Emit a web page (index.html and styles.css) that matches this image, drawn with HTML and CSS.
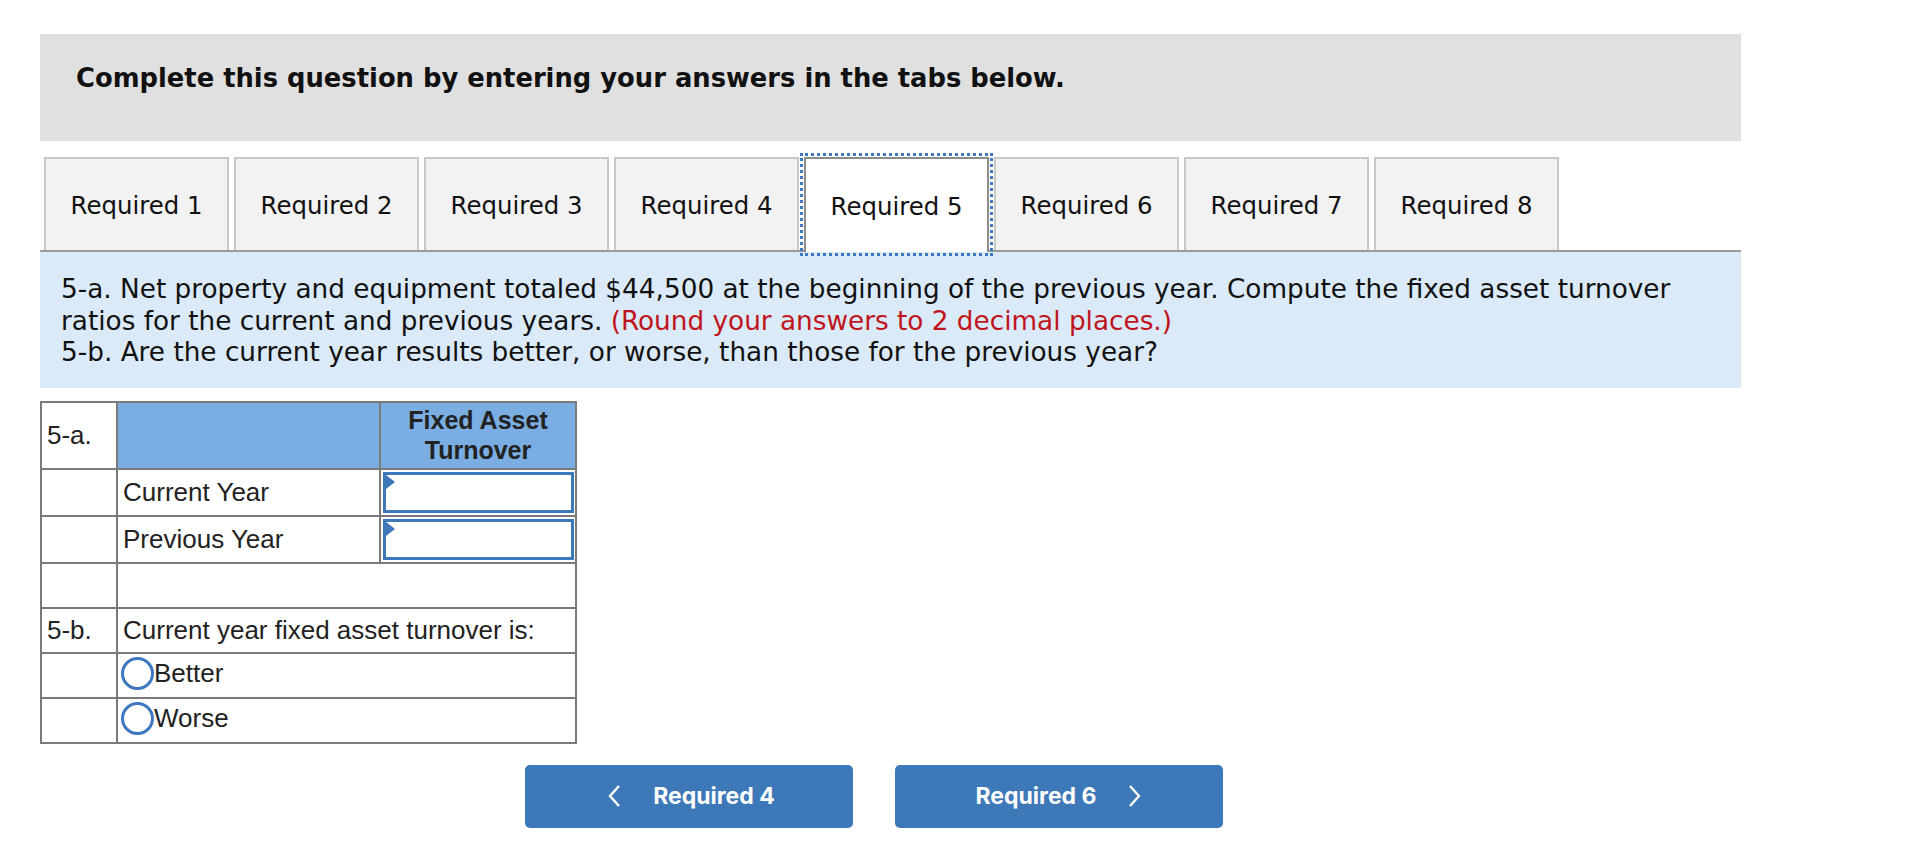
FILE: index.html
```html
<!DOCTYPE html>
<html>
<head>
<meta charset="utf-8">
<link rel="stylesheet" href="styles.css">
</head>
<body>
<div class="page">
  <div class="banner">Complete this question by entering your answers in the tabs below.</div>

  <div class="tabs">
    <div class="tab">Required 1</div>
    <div class="tab">Required 2</div>
    <div class="tab">Required 3</div>
    <div class="tab">Required 4</div>
    <div class="tab active">Required 5</div>
    <div class="tab">Required 6</div>
    <div class="tab">Required 7</div>
    <div class="tab">Required 8</div>
  </div>

  <div class="prompt">
    <p>5-a. Net property and equipment totaled $44,500 at the beginning of the previous year. Compute the fixed asset turnover<br>ratios for the current and previous years. <span class="note">(Round your answers to 2 decimal places.)</span></p>
    <p>5-b. Are the current year results better, or worse, than those for the previous year?</p>
  </div>

  <table class="grid">
    <colgroup>
      <col class="c1"><col class="c2"><col class="c3">
    </colgroup>
    <tr class="head">
      <td class="lbl">5-a.</td>
      <td class="hd"></td>
      <td class="hd title">Fixed Asset<br>Turnover</td>
    </tr>
    <tr>
      <td></td>
      <td>Current Year</td>
      <td class="inp"><div class="field"><span class="flag"></span></div></td>
    </tr>
    <tr>
      <td></td>
      <td>Previous Year</td>
      <td class="inp"><div class="field"><span class="flag"></span></div></td>
    </tr>
    <tr>
      <td></td>
      <td colspan="2"></td>
    </tr>
    <tr>
      <td class="lbl">5-b.</td>
      <td colspan="2">Current year fixed asset turnover is:</td>
    </tr>
    <tr>
      <td></td>
      <td colspan="2" class="opt"><span class="radio"></span>Better</td>
    </tr>
    <tr>
      <td></td>
      <td colspan="2" class="opt"><span class="radio"></span>Worse</td>
    </tr>
  </table>

  <div class="nav">
    <button class="btn prev"><svg class="chev" viewBox="0 0 14 24" width="14" height="24"><path d="M12 2 L3 12 L12 22" fill="none" stroke="#fff" stroke-width="2.4"/></svg><span>Required 4</span></button>
    <button class="btn next"><span>Required 6</span><svg class="chev" viewBox="0 0 14 24" width="14" height="24"><path d="M2 2 L11 12 L2 22" fill="none" stroke="#fff" stroke-width="2.4"/></svg></button>
  </div>
</div>
</body>
</html>
```

FILE: styles.css
```css
html, body {
  margin: 0;
  padding: 0;
  background: #fff;
}

.page {
  padding: 34px 0 0 40px;
  width: 1701px;
  font-family: "DejaVu Sans", Verdana, sans-serif;
  color: #111;
}

.banner {
  background: #e0e0e0;
  height: 107px;
  box-sizing: border-box;
  padding: 29px 36px 0;
  font-weight: bold;
  font-size: 25.8px;
  line-height: 30px;
  color: #111;
}

.tabs {
  display: flex;
  gap: 5px;
  margin-top: 16px;
  padding-left: 4px;
  border-bottom: 2px solid #9a9a9a;
}

.tab {
  width: 185px;
  height: 93px;
  box-sizing: border-box;
  border: 2px solid #c8c8c8;
  border-bottom: none;
  background: #f2f2f2;
  display: flex;
  align-items: center;
  justify-content: center;
  font-size: 24.4px;
  color: #111;
  padding-top: 2px;
}

.tab.active {
  background: #fff;
  border-color: #8c8c8c;
  outline: 3px dotted #3d78c0;
  outline-offset: 1px;
  height: 95px;
  margin-bottom: -2px;
  position: relative;
}

.prompt {
  background: #dbeaf8;
  padding: 22px 21px 19px;
  font-size: 26.3px;
  line-height: 31.5px;
  color: #111;
  white-space: nowrap;
}

.prompt p {
  margin: 0;
}

.note {
  color: #c0141c;
}

.grid {
  margin-top: 13px;
  border-collapse: collapse;
  font-family: "Liberation Sans", Arial, sans-serif;
  font-size: 26px;
  color: #222;
}

.grid col.c1 { width: 76px; }
.grid col.c2 { width: 263px; }
.grid col.c3 { width: 196px; }

.grid td {
  border: 2px solid #7a7a7a;
  height: 43px;
  padding: 0 5px;
  vertical-align: middle;
}

.grid td.lbl {
  padding-left: 5px;
}

.grid tr.head td {
  height: 65px;
}

.grid td.hd {
  background: #7aade2;
}

.grid td.title {
  font-weight: bold;
  font-size: 25px;
  text-align: center;
  line-height: 30px;
  color: #222;
  padding: 0 4px;
}

.grid td.inp {
  padding: 1px 1px 1px 2px;
}

.field {
  height: 41px;
  border: 3px solid #3d78b8;
  box-sizing: border-box;
  background: #fff;
  position: relative;
}

.flag {
  position: absolute;
  left: 0;
  top: 0;
  width: 0;
  height: 0;
  border-top: 7px solid transparent;
  border-bottom: 7px solid transparent;
  border-left: 9px solid #3d78b8;
}

.grid td.opt {
  padding-left: 3px;
}

.radio {
  display: inline-block;
  width: 27px;
  height: 27px;
  border: 3.5px solid #3d78c0;
  border-radius: 50%;
  vertical-align: middle;
  position: relative;
  top: -2px;
}

.nav {
  display: flex;
  gap: 42px;
  margin-top: 21px;
  padding-left: 485px;
}

.btn {
  width: 328px;
  height: 63px;
  background: #3d78b8;
  border: none;
  border-radius: 5px;
  color: #fff;
  font-family: Inter, "Noto Sans", sans-serif;
  font-weight: 700;
  font-size: 23px;
  display: flex;
  align-items: center;
  justify-content: center;
  padding: 0;
}

.btn.prev .chev { margin-right: 32px; margin-left: 4px; }
.btn.next .chev { margin-left: 32px; }
```
